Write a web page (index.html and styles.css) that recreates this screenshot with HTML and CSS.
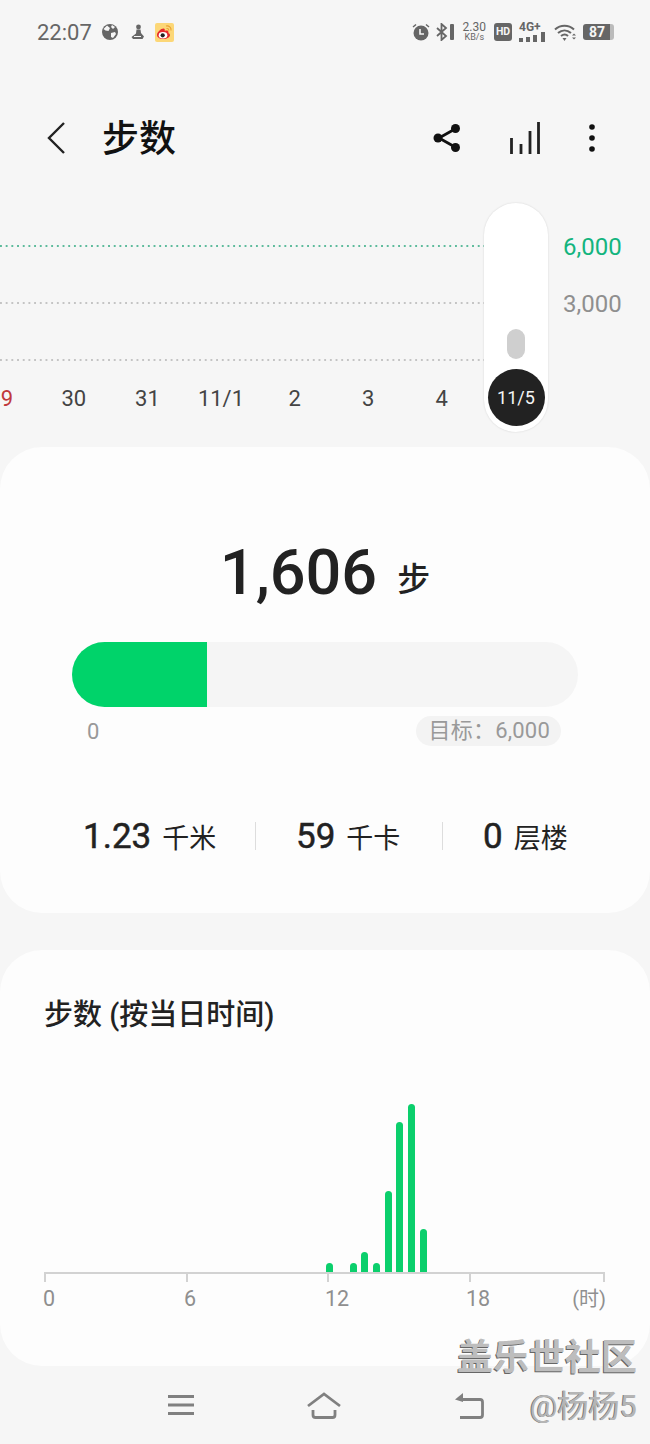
FILE: index.html
```html
<!DOCTYPE html>
<html lang="zh-CN">
<head>
    <meta charset="UTF-8">
    <meta name="viewport" content="width=device-width, initial-scale=1.0">
    <title>步数</title>
    <link rel="stylesheet" href="styles.css">
</head>
<body>

    <div class="status">
        <div class="status-left">
            <span class="clock">22:07</span>
            <svg class="ico-globe" viewBox="0 0 16 16"><circle cx="8" cy="8" r="8" fill="#666"/><path d="M5 1.500 8 4 6.500 7 3.500 6.500 1.500 5Z M9 9l4-1 1 2-3 4-2-1Z M10 1l3 2-2 2-2-2Z" fill="#f6f6f6"/></svg>
            <svg class="ico-run" viewBox="0 0 14 16"><circle cx="7.500" cy="3" r="2.400" fill="#666"/><path d="M5.500 5.500h4L10 9l3 3.500-1.500 2.500H2L.5 13 5 9.500Z" fill="#666"/><path d="M3 12.500h7" stroke="#f6f6f6" stroke-width="1"/></svg>
            <svg class="ico-weibo" viewBox="0 0 19 19"><rect width="19" height="19" rx="2" fill="#fcd777"/><path d="M2 12c0-3 4-6.500 6.500-6.500 1.500 0 1.500 1.500 1.200 2.500 2-.8 3.800-.6 3.800 1.200 0 .4-.2.8 0 1 1 .4 1.500 1 1.500 2 0 1.800-3 3.800-6.500 3.800S2 14.500 2 12Z" fill="#e6292b"/><ellipse cx="8" cy="12.300" rx="4.300" ry="3.300" fill="#fff"/><circle cx="7.700" cy="12.300" r="2.100" fill="#222"/><path d="M11 3c3-.8 5.500 1.500 5 4.500M11.500 5.500c1.500-.3 2.500.8 2.200 2.200" stroke="#e8a030" stroke-width="1.100" fill="none"/></svg>
        </div>
        <div class="status-right">
            <svg class="ico-alarm" viewBox="0 0 18 18"><circle cx="9" cy="10" r="7.500" fill="#666"/><path d="M8 6v5h4" stroke="#f6f6f6" stroke-width="1.600" fill="none"/><path d="M1 4 4 1.500M17 4l-3-2.500" stroke="#666" stroke-width="1.500"/></svg>
            <svg class="ico-bt" viewBox="0 0 19 18"><path d="M1 5l9 8-4.500 4V1L10 5 1 13" stroke="#666" stroke-width="1.800" fill="none"/><rect x="14" y="1" width="4" height="16" rx="1" fill="#666"/></svg>
            <div class="speed"><span>2.30</span><span class="speed-unit">KB/s</span></div>
            <span class="hd">HD</span>
            <div class="net">
                <span class="net-label">4G+</span>
                <svg class="ico-net" viewBox="0 0 27 10"><rect x="0" y="6" width="4" height="4" fill="#666"/><rect x="7" y="5" width="4" height="5" fill="#666"/><rect x="14" y="3" width="4" height="7" fill="#666"/><rect x="22" y="0" width="4" height="10" fill="#666"/></svg>
            </div>
            <svg class="ico-wifi" viewBox="0 0 22 17"><path d="M1 5.500C6.500.5 14.500.5 20 5.500M4 9c4-3.500 9-3.500 13 0M7 12c2.500-2 5-2 7 0" stroke="#666" stroke-width="2" fill="none"/><path d="M8.500 14h4L10.500 17Z" fill="#666"/><path d="M18 11.500l2-2 2 2ZM18 13.500l2 2 2-2Z" fill="#666"/></svg>
            <div class="battery"><span class="battery-num">87</span></div>
        </div>
    </div>

    <div class="header">
        <svg class="back" viewBox="0 0 20 34"><path d="M18 2 3 17l15 15" stroke="#222" stroke-width="2.400" fill="none"/></svg>
        <h1 class="title">步数</h1>
        <svg class="ico-share" viewBox="0 0 28 30"><path d="M22 6 6 15l16 9" stroke="#111" stroke-width="2.800" fill="none"/><circle cx="22.500" cy="5.500" r="4.500" fill="#111"/><circle cx="5" cy="15" r="4.500" fill="#111"/><circle cx="22.500" cy="24.500" r="4.500" fill="#111"/></svg>
        <svg class="ico-bars" viewBox="0 0 30 32"><path d="M1.500 32V16M11 32V22M20 32V9M28.500 32V0" stroke="#222" stroke-width="2.800"/></svg>
        <svg class="ico-more" viewBox="0 0 6 28"><circle cx="3" cy="3" r="2.800" fill="#111"/><circle cx="3" cy="14" r="2.800" fill="#111"/><circle cx="3" cy="25" r="2.800" fill="#111"/></svg>
    </div>

    <div class="trend">
        <div class="trend-plot">
            <div class="grid-row">
                <div class="dots dots-goal"></div>
                <span class="grid-label goal">6,000</span>
            </div>
            <div class="grid-row">
                <div class="dots"></div>
                <span class="grid-label">3,000</span>
            </div>
            <div class="grid-row grid-row-last">
                <div class="dots"></div>
            </div>
        </div>
        <div class="dates">
            <span class="date sunday">9</span>
            <span class="date">30</span>
            <span class="date">31</span>
            <span class="date">11/1</span>
            <span class="date">2</span>
            <span class="date">3</span>
            <span class="date">4</span>
        </div>
        <div class="slider">
            <div class="slider-bar"></div>
            <div class="slider-day">11/5</div>
        </div>
    </div>

    <div class="card card-today">
        <div class="total"><span class="total-num">1,606</span><span class="total-unit">步</span></div>
        <div class="progress"><div class="progress-fill"></div></div>
        <div class="progress-labels">
            <span class="zero">0</span>
            <span class="target">目标：6,000</span>
        </div>
        <div class="stats">
            <div class="stat stat-km"><b>1.23</b><span>千米</span></div>
            <div class="stat stat-kcal"><b>59</b><span>千卡</span></div>
            <div class="stat stat-floor"><b>0</b><span>层楼</span></div>
        </div>
    </div>

    <div class="card card-hours">
        <h2 class="hours-title">步数 (按当日时间)</h2>
        <div class="bars">
            <i class="bar" style="grid-column:25;height:9px"></i>
            <i class="bar" style="grid-column:27;height:9px"></i>
            <i class="bar" style="grid-column:28;height:20px"></i>
            <i class="bar" style="grid-column:29;height:9px"></i>
            <i class="bar" style="grid-column:30;height:81px"></i>
            <i class="bar" style="grid-column:31;height:150px"></i>
            <i class="bar" style="grid-column:32;height:168px"></i>
            <i class="bar" style="grid-column:33;height:43px"></i>
        </div>
        <div class="axis">
            <span class="tick"></span>
            <span class="tick"></span>
            <span class="tick"></span>
            <span class="tick"></span>
            <span class="tick"></span>
        </div>
        <div class="axis-labels">
            <span>0</span>
            <span>6</span>
            <span>12</span>
            <span class="axis-last"><span>18</span><span class="axis-unit">(时)</span></span>
        </div>
    </div>

    <div class="nav">
        <svg class="nav-menu" viewBox="0 0 28 22"><path d="M1 2.500h26M1 11h26M1 19.500h26" stroke="#808080" stroke-width="3"/></svg>
        <svg class="nav-home" viewBox="0 0 36 27"><path d="M2 14 18 2l16 12" stroke="#808080" stroke-width="2.800" fill="none"/><path d="M7 18v5q0 2.500 2.500 2.500h17q2.500 0 2.500-2.500v-5" stroke="#808080" stroke-width="2.800" fill="none"/></svg>
        <svg class="nav-back" viewBox="0 0 30 27"><path d="M7 7.500h19q2.500 0 2.500 2.500v13q0 2.500-2.500 2.500H6" stroke="#808080" stroke-width="2.800" fill="none"/><path d="M9 1 1 7.500 9 10Z" fill="#808080"/></svg>
    </div>

    <div class="watermark">
        <div class="wm-site">盖乐世社区</div>
        <div class="wm-user">@杨杨5</div>
    </div>

</body>
</html>
```

FILE: styles.css
```css
body {
    margin: 0;
    width: 650px;
    height: 1444px;
    position: relative;
    overflow: hidden;
    background-color: #f6f6f6;
    font-family: Roboto, "Noto Sans CJK SC", sans-serif;
    color: #222;
}

/* status bar */
.status {
    height: 64px;
    display: flex;
    align-items: center;
    justify-content: space-between;
    padding: 0 36px 0 37px;
    color: #666;
}
.status-left, .status-right {
    display: flex;
    align-items: center;
}
.clock {
    font-size: 22px;
    margin-right: 10px;
}
.ico-globe { width: 16px; height: 16px; margin-right: 13px; }
.ico-run { width: 14px; height: 16px; margin-right: 10px; }
.ico-weibo { width: 19px; height: 19px; }
.ico-alarm { width: 18px; height: 18px; margin-right: 6px; }
.ico-bt { width: 19px; height: 18px; margin-right: 8px; }
.speed {
    display: flex;
    flex-direction: column;
    align-items: center;
    font-size: 12px;
    line-height: 10px;
    margin-right: 8px;
}
.speed-unit { font-size: 9px; }
.hd {
    width: 18px;
    height: 18px;
    border-radius: 3px;
    background-color: #666;
    color: #f6f6f6;
    font-size: 10.500px;
    font-weight: 700;
    line-height: 18px;
    text-align: center;
    margin-right: 7px;
}
.net {
    width: 27px;
    margin-right: 8px;
    display: flex;
    flex-direction: column;
}
.net-label {
    font-size: 12px;
    font-weight: 700;
    line-height: 10px;
}
.ico-net { width: 27px; height: 10px; }
.ico-wifi { width: 22px; height: 17px; margin-right: 7px; }
.battery {
    width: 31px;
    height: 16px;
    border-radius: 3px;
    background: linear-gradient(to right, #666 27px, #bbb 27px);
    color: #f6f6f6;
    font-size: 14px;
    font-weight: 700;
    line-height: 16px;
    text-align: center;
}
.battery-num { margin-right: 3px; }

/* header */
.header {
    height: 120px;
    margin-top: 14px;
    display: flex;
    align-items: center;
}
.back { width: 20px; height: 34px; margin-left: 46px; }
.title {
    margin: 0 0 0 36px;
    padding-bottom: 4px;
    width: 331px;
    font-size: 37px;
    font-weight: 500;
    color: #111;
}
.ico-share { width: 28px; height: 30px; }
.ico-bars { width: 30px; height: 32px; margin-left: 49px; }
.ico-more { width: 6px; height: 28px; margin-left: 49px; }

/* week chart */
.trend {
    height: 249px;
    position: relative;
}
.trend-plot { padding-top: 47px; }
.grid-row {
    height: 57px;
    display: flex;
    align-items: flex-start;
}
.grid-row-last { height: 18px; }
.dots {
    width: 484px;
    height: 2px;
    background-image: linear-gradient(to right, #c4c4c4 2px, transparent 2px);
    background-size: 5.700px 2px;
}
.dots-goal {
    background-image: linear-gradient(to right, #5dbb9c 2px, transparent 2px);
}
.grid-label {
    margin: -12px 0 0 79px;
    font-size: 24px;
    line-height: 28px;
    color: #8f8f8f;
}
.goal { color: #13b47e; }
.dates {
    display: flex;
    margin-top: 9px;
    color: #444;
    font-size: 22px;
    line-height: 26px;
}
.date {
    width: 73.600px;
    text-align: center;
}
.sunday {
    width: 13px;
    margin-right: 24px;
    color: #c0393b;
    text-align: right;
}
.slider {
    position: absolute;
    left: 484px;
    top: 5px;
    width: 64px;
    height: 229px;
    box-sizing: border-box;
    padding-bottom: 6px;
    border-radius: 32px;
    background-color: #fff;
    box-shadow: 0 0 2px rgba(0,0,0,0.15);
    display: flex;
    flex-direction: column;
    justify-content: flex-end;
    align-items: center;
    gap: 10px;
}
.slider-bar {
    width: 18px;
    height: 30px;
    border-radius: 9px;
    background-color: #cfcfcf;
}
.slider-day {
    width: 57px;
    height: 57px;
    border-radius: 50%;
    background-color: #222;
    color: #f4f4f4;
    font-size: 18px;
    line-height: 57px;
    text-align: center;
}

/* cards */
.card {
    background-color: #fdfdfd;
    border-radius: 42px;
    box-sizing: border-box;
}
.card-today {
    height: 466px;
    padding: 91px 72px 0;
}
.total {
    display: flex;
    justify-content: center;
    align-items: center;
    line-height: 70px;
    height: 70px;
}
.total-num {
    font-size: 63px;
    font-weight: 500;
}
.total-unit {
    font-size: 33px;
    font-weight: 500;
    line-height: 40px;
    margin: 14px 0 0 20px;
}
.progress {
    margin-top: 34px;
    height: 65px;
    width: 506px;
    border-radius: 33px;
    background-color: #f5f5f5;
    overflow: hidden;
}
.progress-fill {
    width: 135px;
    height: 65px;
    background-color: #00d36a;
}
.progress-labels {
    margin-top: 9px;
    width: 489px;
    display: flex;
    justify-content: space-between;
    align-items: center;
    font-size: 22px;
    color: #999;
}
.zero { margin-left: 15px; }
.target {
    height: 30px;
    line-height: 30px;
    padding: 0 11px 0 13px;
    border-radius: 15px;
    background-color: #f3f3f3;
    letter-spacing: 0.2px;
}
.stats {
    margin: 70px 0 0 -72px;
    display: flex;
    align-items: center;
    height: 40px;
}
.stat {
    height: 28px;
    display: flex;
    align-items: center;
    box-sizing: border-box;
}
.stat b {
    font-size: 35px;
    font-weight: 400;
    -webkit-text-stroke: 0.5px #222;
}
.stat span {
    font-size: 27px;
    margin-left: 11px;
}
.stat-km {
    width: 256px;
    padding-left: 83px;
    border-right: 1px solid #ddd;
}
.stat-kcal {
    width: 187px;
    padding-left: 40px;
    border-right: 1px solid #ddd;
}
.stat-floor { padding-left: 40px; }

.card-hours {
    height: 416px;
    margin-top: 37px;
    padding: 44px 46px 0 44px;
}
.hours-title {
    margin: 0;
    font-size: 29px;
    font-weight: 500;
    line-height: 42px;
    color: #222;
}
.bars {
    margin-top: 68px;
    height: 168px;
    width: 560px;
    display: grid;
    grid-template-columns: repeat(48, 1fr);
    align-items: end;
    justify-items: center;
}
.bar {
    display: block;
    grid-row: 1;
    width: 7px;
    border-radius: 3.500px 3.500px 0 0;
    background-color: #0bcf6c;
}
.axis {
    width: 561px;
    height: 10px;
    border-top: 2px solid #d2d2d2;
    display: grid;
    grid-template-columns: 141.500px 141.500px 141.500px 134.500px 2px;
}
.tick {
    width: 2px;
    height: 8px;
    background-color: #d2d2d2;
}
.axis-labels {
    margin: 3px 0 0 -1px;
    width: 563px;
    display: grid;
    grid-template-columns: 141px 141px 141px 1fr;
    font-size: 21.500px;
    line-height: 24px;
    color: #8f8f8f;
}
.axis-last {
    display: flex;
    justify-content: space-between;
}
.axis-unit { font-size: 20px; }

/* navigation */
.nav {
    height: 78px;
    display: flex;
    align-items: center;
}
.nav-menu { width: 28px; height: 22px; margin-left: 167px; }
.nav-home { width: 36px; height: 27px; margin-left: 111px; }
.nav-back { width: 30px; height: 27px; margin-left: 112px; }

/* watermark sits over the page */
.watermark {
    position: absolute;
    right: 13px;
    top: 1336px;
    text-align: right;
}
.wm-site {
    font-size: 36px;
    font-weight: 700;
    line-height: 44px;
    color: #bdbdbd;
    text-shadow: -1px 1px 0 #666;
}
.wm-user {
    margin-top: 5px;
    font-size: 31px;
    line-height: 44px;
    color: #b5b5b5;
    text-shadow: -1px 0 0 #777;
}
```
